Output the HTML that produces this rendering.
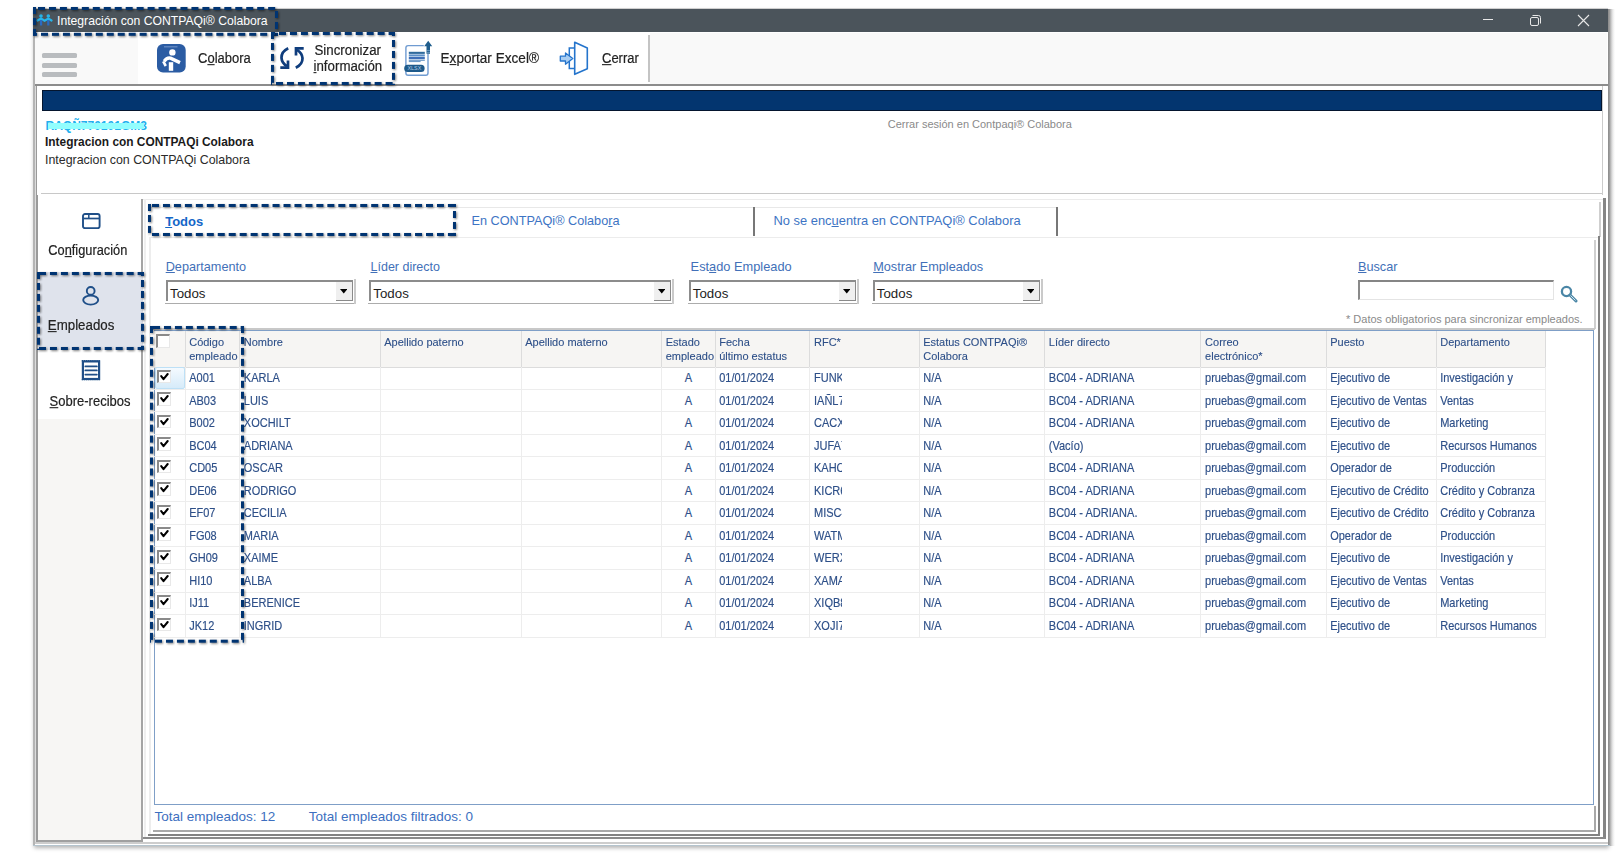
<!DOCTYPE html><html><head><meta charset="utf-8"><style>
html,body{margin:0;padding:0;}
body{width:1617px;height:855px;position:relative;overflow:hidden;background:#fff;font-family:"Liberation Sans", sans-serif;}
.t{position:absolute;white-space:nowrap;font-family:"Liberation Sans", sans-serif;}
.r{position:absolute;}
.dash{filter:drop-shadow(1px 1.5px 1.1px rgba(0,0,0,0.5));overflow:visible;}
u{text-decoration:underline;text-underline-offset:1px;}
</style></head><body>
<div class="r" style="left:33px;top:9px;width:1575px;height:837px;background:#f0f0f0;box-shadow:1px 2px 4px rgba(0,0,0,0.3);"></div>
<div class="r" style="left:33px;top:7.8px;width:1575px;height:1.2000000000000002px;background:#cfcfcf;"></div>
<div class="r" style="left:33px;top:9px;width:1575px;height:23px;background:#4b545b;"></div>
<svg class="r" style="left:36px;top:13px" width="18" height="14" viewBox="0 0 18 14">
<circle cx="5" cy="3" r="1.8" fill="#26b4ea"/><circle cx="12.3" cy="3" r="1.8" fill="#26b4ea"/>
<path d="M1.5 7.5 L5 5.5 L8.6 7.8 L12.3 5.5 L15.5 7.5" stroke="#26b4ea" stroke-width="2.2" fill="none" stroke-linecap="round"/>
<rect x="4" y="7" width="2.2" height="5.5" fill="#2a6bc2"/><rect x="11.2" y="7" width="2.2" height="5.5" fill="#2a6bc2"/>
</svg>
<div class="t" style="left:57px;top:14.67px;font-size:12.2px;line-height:12.2px;color:#ffffff;font-weight:normal;">Integración con CONTPAQi® Colabora</div>
<div class="r" style="left:1483px;top:19px;width:10px;height:1px;background:#e8e8e8;"></div>
<svg class="r" style="left:1529px;top:14px" width="13" height="13" viewBox="0 0 13 13">
<rect x="1.5" y="3.5" width="8" height="8" rx="1.5" fill="none" stroke="#e8e8e8" stroke-width="1"/>
<path d="M3.5 1.5 H9.5 Q11.5 1.5 11.5 3.5 V9.5" fill="none" stroke="#e8e8e8" stroke-width="1"/></svg>
<svg class="r" style="left:1577px;top:14px" width="13" height="13" viewBox="0 0 13 13">
<path d="M1 1 L12 12 M12 1 L1 12" stroke="#e8e8e8" stroke-width="1.1"/></svg>
<div class="r" style="left:35px;top:32px;width:1573px;height:52px;background:#f9f9f9;"></div>
<div class="r" style="left:35px;top:32px;width:1573px;height:1px;background:#ffffff;"></div>
<div class="r" style="left:1606.8px;top:33px;width:1.2000000000000455px;height:51px;background:#ffffff;"></div>
<div class="r" style="left:138px;top:32px;width:512px;height:52px;background:#ffffff;"></div>
<div class="r" style="left:648.2px;top:35px;width:1.599999999999909px;height:47px;background:#c4c4c4;"></div>
<div class="r" style="left:42px;top:53px;width:35px;height:5px;background:#b9bcbf;border-radius:1.6px;"></div>
<div class="r" style="left:42px;top:63px;width:35px;height:5px;background:#b9bcbf;border-radius:1.6px;"></div>
<div class="r" style="left:42px;top:72px;width:35px;height:5px;background:#b9bcbf;border-radius:1.6px;"></div>
<div class="r" style="left:35px;top:84px;width:1573px;height:2px;background:#8c8c8c;"></div>
<div class="r" style="left:33px;top:32px;width:2px;height:814px;background:#b4b4b4;"></div>
<div class="r" style="left:1608px;top:9px;width:7px;height:837.2px;background:linear-gradient(to right,#8a8a8a 0%,#9a9a9a 20%,#c8c8c8 45%,#ececec 70%,#ffffff 100%);"></div>
<svg class="r" style="left:156.7px;top:43.6px" width="29" height="29" viewBox="0 0 29 29">
<rect x="0" y="0" width="28.7" height="28.6" rx="6" fill="#2b5ca3"/>
<rect x="7" y="2.4" width="13.5" height="0.9" fill="#7f9fd2"/>
<circle cx="15.4" cy="8.4" r="3.2" fill="#fff"/>
<path d="M7.2 17.2 Q10 13.4 13.5 14.2 L23 18.6" stroke="#fff" stroke-width="3.4" fill="none"/>
<path d="M6.2 17.4 L8.8 22" stroke="#fff" stroke-width="2.6" fill="none"/>
<rect x="11.8" y="18.2" width="4.4" height="8.6" fill="#fff"/>
</svg>
<div class="t" style="left:198px;top:52.00px;font-size:13px;line-height:13px;color:#222;font-weight:normal;transform:scaleY(1.1);transform-origin:0 11.00px;-webkit-text-stroke:0.18px #222;">C<u>o</u>labora</div>
<svg class="r" style="left:276px;top:42px" width="32" height="32" viewBox="0 0 32 32">
<g stroke="#0f3d7d" stroke-width="2.7" fill="none">
<path d="M12.2 6.3 Q5.3 9.8 5.5 15.8 Q5.8 21 11 24.2"/>
<path d="M4.3 25.6 H12 V18.6" stroke-linejoin="miter"/>
<path d="M19.8 25.7 Q26.7 22.2 26.5 16.2 Q26.2 11 21 7.8"/>
<path d="M27.7 6.4 H20 V13.4" stroke-linejoin="miter"/>
</g></svg>
<div class="t" style="left:314.5px;top:43.54px;font-size:13.3px;line-height:13.3px;color:#222;font-weight:normal;transform:scaleY(1.1);transform-origin:0 11.26px;-webkit-text-stroke:0.18px #222;">Sincronizar</div>
<div class="t" style="left:313.5px;top:59.94px;font-size:13.3px;line-height:13.3px;color:#222;font-weight:normal;transform:scaleY(1.1);transform-origin:0 11.26px;-webkit-text-stroke:0.18px #222;"><u>i</u>nformación</div>
<svg class="r" style="left:400px;top:38px" width="36" height="42" viewBox="0 0 36 42">
<rect x="5.9" y="7.6" width="22.1" height="29.7" rx="2.2" fill="#fff" stroke="#6f9bd1" stroke-width="1.4"/>
<rect x="23.8" y="4" width="9" height="12" fill="#fff"/>
<path d="M28.2 2.7 L24.2 8.2 H26.5 V15.8 H30 V8.2 H32.2 Z" fill="#1f5d8c"/>
<path d="M26.5 12.6 H30 M26.5 14.4 H30" stroke="#9cc0e0" stroke-width="0.6"/>
<rect x="8.8" y="13.8" width="16" height="2.1" fill="#2f6a9c"/>
<rect x="8.8" y="16.4" width="16" height="2.1" fill="#5d90c8"/>
<rect x="8.8" y="19" width="16" height="2.1" fill="#3f6fb8"/>
<rect x="8.8" y="21.6" width="16" height="1.3" fill="#6f9bc8"/>
<rect x="8.8" y="22.9" width="11.8" height="1.2" fill="#6f9bc8"/>
<rect x="4.2" y="26.8" width="20.4" height="7.1" rx="3.5" fill="#1e5a8a"/>
<text x="14.4" y="32.3" font-size="5.4" fill="#b4cce4" text-anchor="middle" font-family="Liberation Sans">XLSX</text>
</svg>
<div class="t" style="left:440.5px;top:51.79px;font-size:13.6px;line-height:13.6px;color:#222;font-weight:normal;transform:scaleY(1.07);transform-origin:0 11.51px;-webkit-text-stroke:0.18px #222;">E<u>x</u>portar Excel®</div>
<svg class="r" style="left:559px;top:41px" width="32" height="35" viewBox="0 0 32 35">
<path d="M15.7 1.3 L28.3 7 V27.8 L15.7 33.3 Z" fill="#fff" stroke="#2474cc" stroke-width="1.6" stroke-linejoin="round"/>
<path d="M15.5 6.9 H10.3 V27.6 H15.5" fill="none" stroke="#2474cc" stroke-width="1.5"/>
<path d="M1.3 15.2 H6.5 V12 L13.8 17.6 L6.5 23.2 V20 H1.3 Z" fill="#a8cdf2" stroke="#2474cc" stroke-width="1.3" stroke-linejoin="round"/>
</svg>
<div class="t" style="left:602px;top:52.00px;font-size:13px;line-height:13px;color:#222;font-weight:normal;transform:scaleY(1.1);transform-origin:0 11.00px;-webkit-text-stroke:0.18px #222;"><u>C</u>errar</div>
<div class="r" style="left:35px;top:86px;width:1573px;height:760px;background:#ffffff;"></div>
<div class="r" style="left:36px;top:86px;width:1567px;height:109px;background:#ffffff;border-left:1.5px solid #999;border-right:1px solid #ccc;box-sizing:border-box;"></div>
<div class="r" style="left:41px;top:193.3px;width:1561px;height:1.1999999999999886px;background:#c8c8c8;"></div>
<div class="r" style="left:42px;top:90px;width:1560px;height:21px;background:#03356f;border:1px solid #04152e;box-sizing:border-box;"></div>
<div class="t" style="left:45.5px;top:119.64px;font-size:12px;line-height:12px;color:#22b0ee;font-weight:bold;">RAQÑ770101GM3</div>
<div class="r" style="left:48px;top:123px;width:96px;height:5.5px;background:#92fefe;"></div>
<div class="t" style="left:45px;top:136.53px;font-size:11.9px;line-height:11.9px;color:#1a1a1a;font-weight:bold;">Integracion con CONTPAQi Colabora</div>
<div class="t" style="left:45px;top:153.50px;font-size:12.4px;line-height:12.4px;color:#2a2a2a;font-weight:normal;">Integracion con CONTPAQi Colabora</div>
<div class="t" style="left:887.7px;top:119.29px;font-size:11px;line-height:11px;color:#8a8a8a;font-weight:normal;">Cerrar sesión en Contpaqi® Colabora</div>
<div class="r" style="left:35px;top:86px;width:1px;height:756px;background:#dcdcdc;"></div>
<div class="r" style="left:36px;top:195px;width:2px;height:647px;background:#9a9a9a;"></div>
<div class="r" style="left:38px;top:199px;width:104px;height:642px;background:#f7f6f4;"></div>
<div class="r" style="left:38px;top:199px;width:104px;height:220px;background:#ffffff;"></div>
<div class="r" style="left:141.3px;top:199px;width:1.6999999999999886px;height:642.6px;background:#a4a4a4;"></div>
<div class="r" style="left:38px;top:840px;width:105px;height:1.6000000000000227px;background:#a0a0a0;"></div>
<div class="r" style="left:38px;top:272px;width:106px;height:78px;background:#dfe3ec;"></div>
<svg class="r" style="left:82px;top:213px" width="19" height="16" viewBox="0 0 19 16">
<rect x="1" y="1" width="16.6" height="14.2" rx="2" fill="none" stroke="#1f4f88" stroke-width="1.9"/>
<path d="M1.5 5.5 H17.5" stroke="#1f4f88" stroke-width="1.7"/>
<path d="M6.8 1.5 V5" stroke="#1f4f88" stroke-width="1.5"/>
</svg>
<div class="t" style="left:48.3px;top:244.66px;font-size:12.8px;line-height:12.8px;color:#222;font-weight:normal;transform:scaleY(1.14);transform-origin:0 10.84px;-webkit-text-stroke:0.18px #222;">Co<u>n</u>figuración</div>
<svg class="r" style="left:82px;top:285px" width="18" height="21" viewBox="0 0 18 21">
<ellipse cx="8.7" cy="15.1" rx="7.5" ry="4.5" fill="none" stroke="#1f4f88" stroke-width="1.9"/>
<circle cx="8.7" cy="5.9" r="3.9" fill="#dfe3ec" stroke="#1f4f88" stroke-width="1.9"/>
</svg>
<div class="t" style="left:47.8px;top:318.54px;font-size:13.3px;line-height:13.3px;color:#222;font-weight:normal;transform:scaleY(1.1);transform-origin:0 11.26px;-webkit-text-stroke:0.18px #222;"><u>E</u>mpleados</div>
<svg class="r" style="left:81px;top:359px" width="20" height="22" viewBox="0 0 20 22">
<rect x="1.9" y="2.4" width="16.2" height="17.6" fill="none" stroke="#1f4f88" stroke-width="2.2"/>
<path d="M0.8 1.8 H19.2 M0.8 20.6 H19.2" stroke="#1f4f88" stroke-width="1.4" stroke-dasharray="1.2 0.9"/>
<path d="M4.3 7.4 H15.9 M4.3 11.4 H15.9 M4.3 15.6 H15.9" stroke="#1f4f88" stroke-width="1.7" stroke-linecap="round"/>
</svg>
<div class="t" style="left:49.6px;top:395.40px;font-size:13px;line-height:13px;color:#222;font-weight:normal;transform:scaleY(1.12);transform-origin:0 11.00px;-webkit-text-stroke:0.18px #222;"><u>S</u>obre-recibos</div>
<div class="r" style="left:143px;top:198px;width:1463px;height:641px;background:#ffffff;"></div>
<div class="r" style="left:143px;top:199.2px;width:1460px;height:1.200000000000017px;background:#ececec;"></div>
<div class="r" style="left:144.2px;top:199.2px;width:1.4000000000000057px;height:637.8px;background:#efefef;"></div>
<div class="r" style="left:1603px;top:197.8px;width:2.7999999999999545px;height:641.2px;background:#858585;"></div>
<div class="r" style="left:143px;top:836.7px;width:1462.8px;height:2.099999999999909px;background:#8a8a8a;"></div>
<div class="r" style="left:151px;top:206.5px;width:905px;height:1.0px;background:#e8e8e8;"></div>
<div class="r" style="left:150px;top:237px;width:1450px;height:1.3000000000000114px;background:#ececec;"></div>
<div class="r" style="left:1599.3px;top:202.3px;width:1.7000000000000455px;height:34.69999999999999px;background:#cfcfcf;"></div>
<div class="r" style="left:753px;top:207px;width:2px;height:29px;background:#777;"></div>
<div class="r" style="left:1055.5px;top:207px;width:2.2000000000000455px;height:29px;background:#777;"></div>
<div class="t" style="left:165.2px;top:214.60px;font-size:13px;line-height:13px;color:#1466c8;font-weight:bold;"><u>T</u>odos</div>
<div class="t" style="left:471.5px;top:214.75px;font-size:12.7px;line-height:12.7px;color:#3d74c4;font-weight:normal;">En CONTPAQi® Colabo<u>r</u>a</div>
<div class="t" style="left:773.5px;top:214.58px;font-size:12.9px;line-height:12.9px;color:#3d74c4;font-weight:normal;">No se enc<u>u</u>entra en CONTPAQi® Colabora</div>
<div class="r" style="left:148.9px;top:237.3px;width:1.799999999999983px;height:596.7px;background:#ededed;"></div>
<div class="r" style="left:1594.3px;top:240.4px;width:1.2999999999999545px;height:88.6px;background:#cfcfcf;"></div>
<div class="t" style="left:165.7px;top:260.55px;font-size:12.7px;line-height:12.7px;color:#4270b8;font-weight:normal;"><u>D</u>epartamento</div>
<div class="t" style="left:370.5px;top:260.72px;font-size:12.5px;line-height:12.5px;color:#4270b8;font-weight:normal;"><u>L</u>íder directo</div>
<div class="t" style="left:690.6px;top:260.76px;font-size:12.8px;line-height:12.8px;color:#4270b8;font-weight:normal;">Est<u>a</u>do Empleado</div>
<div class="t" style="left:873.2px;top:260.85px;font-size:12.7px;line-height:12.7px;color:#4270b8;font-weight:normal;"><u>M</u>ostrar Empleados</div>
<div class="t" style="left:1358px;top:260.55px;font-size:12.7px;line-height:12.7px;color:#4270b8;font-weight:normal;"><u>B</u>uscar</div>
<div class="r" style="left:165.8px;top:280.3px;width:187.2px;height:2.1999999999999886px;background:#8c8c8c;"></div>
<div class="r" style="left:165.8px;top:280.3px;width:2.1999999999999886px;height:21.19999999999999px;background:#8c8c8c;"></div>
<div class="r" style="left:165px;top:303px;width:191px;height:1px;background:#acacac;"></div>
<div class="r" style="left:354.3px;top:279px;width:1.6999999999999886px;height:25px;background:#cacaca;"></div>
<div class="r" style="left:336px;top:282px;width:17px;height:19px;background:#efefef;border-right:1.7px solid #8a8a8a;border-bottom:1.5px solid #8a8a8a;box-sizing:border-box;"></div>
<svg class="r" style="left:339.8px;top:289.3px" width="7.5" height="4.6" viewBox="0 0 7.5 4.6"><path d="M0 0 H7.5 L3.75 4.6 Z" fill="#000"/></svg>
<div class="r" style="left:368.8px;top:280.3px;width:302.2px;height:2.1999999999999886px;background:#8c8c8c;"></div>
<div class="r" style="left:368.8px;top:280.3px;width:2.1999999999999886px;height:21.19999999999999px;background:#8c8c8c;"></div>
<div class="r" style="left:368px;top:303px;width:306px;height:1px;background:#acacac;"></div>
<div class="r" style="left:672.3px;top:279px;width:1.7000000000000455px;height:25px;background:#cacaca;"></div>
<div class="r" style="left:654px;top:282px;width:17px;height:19px;background:#efefef;border-right:1.7px solid #8a8a8a;border-bottom:1.5px solid #8a8a8a;box-sizing:border-box;"></div>
<svg class="r" style="left:657.8px;top:289.3px" width="7.5" height="4.6" viewBox="0 0 7.5 4.6"><path d="M0 0 H7.5 L3.75 4.6 Z" fill="#000"/></svg>
<div class="r" style="left:688.8px;top:280.3px;width:167.20000000000005px;height:2.1999999999999886px;background:#8c8c8c;"></div>
<div class="r" style="left:688.8px;top:280.3px;width:2.2000000000000455px;height:21.19999999999999px;background:#8c8c8c;"></div>
<div class="r" style="left:688px;top:303px;width:171px;height:1px;background:#acacac;"></div>
<div class="r" style="left:857.3px;top:279px;width:1.7000000000000455px;height:25px;background:#cacaca;"></div>
<div class="r" style="left:839px;top:282px;width:17px;height:19px;background:#efefef;border-right:1.7px solid #8a8a8a;border-bottom:1.5px solid #8a8a8a;box-sizing:border-box;"></div>
<svg class="r" style="left:842.8px;top:289.3px" width="7.5" height="4.6" viewBox="0 0 7.5 4.6"><path d="M0 0 H7.5 L3.75 4.6 Z" fill="#000"/></svg>
<div class="r" style="left:872.8px;top:280.3px;width:167.20000000000005px;height:2.1999999999999886px;background:#8c8c8c;"></div>
<div class="r" style="left:872.8px;top:280.3px;width:2.2000000000000455px;height:21.19999999999999px;background:#8c8c8c;"></div>
<div class="r" style="left:872px;top:303px;width:171px;height:1px;background:#acacac;"></div>
<div class="r" style="left:1041.3px;top:279px;width:1.7000000000000455px;height:25px;background:#cacaca;"></div>
<div class="r" style="left:1023px;top:282px;width:17px;height:19px;background:#efefef;border-right:1.7px solid #8a8a8a;border-bottom:1.5px solid #8a8a8a;box-sizing:border-box;"></div>
<svg class="r" style="left:1026.8px;top:289.3px" width="7.5" height="4.6" viewBox="0 0 7.5 4.6"><path d="M0 0 H7.5 L3.75 4.6 Z" fill="#000"/></svg>
<div class="t" style="left:170px;top:286.54px;font-size:13.3px;line-height:13.3px;color:#1e1e1e;font-weight:normal;">Todos</div>
<div class="t" style="left:373.3px;top:286.54px;font-size:13.3px;line-height:13.3px;color:#1e1e1e;font-weight:normal;">Todos</div>
<div class="t" style="left:692.8px;top:286.54px;font-size:13.3px;line-height:13.3px;color:#1e1e1e;font-weight:normal;">Todos</div>
<div class="t" style="left:876.8px;top:286.54px;font-size:13.3px;line-height:13.3px;color:#1e1e1e;font-weight:normal;">Todos</div>
<div class="r" style="left:1358px;top:279.8px;width:195.5px;height:20.69999999999999px;background:#fff;border-top:2px solid #858585;border-left:2px solid #8a8a8a;border-right:1px solid #e4e4e4;border-bottom:1px solid #e4e4e4;box-sizing:border-box;"></div>
<svg class="r" style="left:1560px;top:285px" width="18" height="18" viewBox="0 0 18 18">
<circle cx="6.5" cy="6.5" r="4.6" fill="none" stroke="#4a86a6" stroke-width="2.3"/>
<path d="M10 10 L16 16" stroke="#4a86a6" stroke-width="3" stroke-linecap="round"/>
<path d="M10.5 10.5 L15.5 15.5" stroke="#cfe3ec" stroke-width="1"/>
</svg>
<div class="t" style="left:1346px;top:313.69px;font-size:11px;line-height:11px;color:#8a8a8a;font-weight:normal;">* Datos obligatorios para sincronizar empleados.</div>
<div class="r" style="left:152px;top:328px;width:1443px;height:2px;background:#c8c8c8;"></div>
<div class="r" style="left:154px;top:330px;width:1440px;height:475px;background:#ffffff;border:1px solid #7f9fc7;box-sizing:border-box;"></div>
<div class="r" style="left:154px;top:331px;width:1391px;height:36px;background:#f6f5f3;"></div>
<div class="r" style="left:154px;top:366.5px;width:1392px;height:1.1999999999999886px;background:#dcdcdc;"></div>
<div class="r" style="left:184.5px;top:331px;width:1.0px;height:36px;background:#dcdcdc;"></div>
<div class="r" style="left:239.1px;top:331px;width:1.0px;height:36px;background:#dcdcdc;"></div>
<div class="r" style="left:379.5px;top:331px;width:1.0px;height:36px;background:#dcdcdc;"></div>
<div class="r" style="left:520.5px;top:331px;width:1.0px;height:36px;background:#dcdcdc;"></div>
<div class="r" style="left:661.0px;top:331px;width:1.0px;height:36px;background:#dcdcdc;"></div>
<div class="r" style="left:714.5px;top:331px;width:1.0px;height:36px;background:#dcdcdc;"></div>
<div class="r" style="left:809.3px;top:331px;width:1.0px;height:36px;background:#dcdcdc;"></div>
<div class="r" style="left:918.5px;top:331px;width:1.0px;height:36px;background:#dcdcdc;"></div>
<div class="r" style="left:1044.1px;top:331px;width:1.0px;height:36px;background:#dcdcdc;"></div>
<div class="r" style="left:1200.4px;top:331px;width:1.0px;height:36px;background:#dcdcdc;"></div>
<div class="r" style="left:1325.5px;top:331px;width:1.0px;height:36px;background:#dcdcdc;"></div>
<div class="r" style="left:1435.5px;top:331px;width:1.0px;height:36px;background:#dcdcdc;"></div>
<div class="r" style="left:1544.5px;top:331px;width:1.0px;height:36px;background:#dcdcdc;"></div>
<div class="t" style="left:189.2px;top:337.09px;font-size:11px;line-height:11px;color:#2d4f88;font-weight:normal;transform:scaleY(1.07);transform-origin:0 9.31px;-webkit-text-stroke:0.1px #2d4f88;">Código</div>
<div class="t" style="left:189.2px;top:350.99px;font-size:11px;line-height:11px;color:#2d4f88;font-weight:normal;transform:scaleY(1.07);transform-origin:0 9.31px;-webkit-text-stroke:0.1px #2d4f88;">empleado</div>
<div class="t" style="left:243.79999999999998px;top:337.09px;font-size:11px;line-height:11px;color:#2d4f88;font-weight:normal;transform:scaleY(1.07);transform-origin:0 9.31px;-webkit-text-stroke:0.1px #2d4f88;">Nombre</div>
<div class="t" style="left:384.2px;top:337.09px;font-size:11px;line-height:11px;color:#2d4f88;font-weight:normal;transform:scaleY(1.07);transform-origin:0 9.31px;-webkit-text-stroke:0.1px #2d4f88;">Apellido paterno</div>
<div class="t" style="left:525.2px;top:337.09px;font-size:11px;line-height:11px;color:#2d4f88;font-weight:normal;transform:scaleY(1.07);transform-origin:0 9.31px;-webkit-text-stroke:0.1px #2d4f88;">Apellido materno</div>
<div class="t" style="left:665.7px;top:337.09px;font-size:11px;line-height:11px;color:#2d4f88;font-weight:normal;transform:scaleY(1.07);transform-origin:0 9.31px;-webkit-text-stroke:0.1px #2d4f88;">Estado</div>
<div class="t" style="left:665.7px;top:350.99px;font-size:11px;line-height:11px;color:#2d4f88;font-weight:normal;transform:scaleY(1.07);transform-origin:0 9.31px;-webkit-text-stroke:0.1px #2d4f88;">empleado</div>
<div class="t" style="left:719.2px;top:337.09px;font-size:11px;line-height:11px;color:#2d4f88;font-weight:normal;transform:scaleY(1.07);transform-origin:0 9.31px;-webkit-text-stroke:0.1px #2d4f88;">Fecha</div>
<div class="t" style="left:719.2px;top:350.99px;font-size:11px;line-height:11px;color:#2d4f88;font-weight:normal;transform:scaleY(1.07);transform-origin:0 9.31px;-webkit-text-stroke:0.1px #2d4f88;">último estatus</div>
<div class="t" style="left:814.0px;top:337.09px;font-size:11px;line-height:11px;color:#2d4f88;font-weight:normal;transform:scaleY(1.07);transform-origin:0 9.31px;-webkit-text-stroke:0.1px #2d4f88;">RFC*</div>
<div class="t" style="left:923.2px;top:337.09px;font-size:11px;line-height:11px;color:#2d4f88;font-weight:normal;transform:scaleY(1.07);transform-origin:0 9.31px;-webkit-text-stroke:0.1px #2d4f88;">Estatus CONTPAQi®</div>
<div class="t" style="left:923.2px;top:350.99px;font-size:11px;line-height:11px;color:#2d4f88;font-weight:normal;transform:scaleY(1.07);transform-origin:0 9.31px;-webkit-text-stroke:0.1px #2d4f88;">Colabora</div>
<div class="t" style="left:1048.8px;top:337.09px;font-size:11px;line-height:11px;color:#2d4f88;font-weight:normal;transform:scaleY(1.07);transform-origin:0 9.31px;-webkit-text-stroke:0.1px #2d4f88;">Líder directo</div>
<div class="t" style="left:1205.1000000000001px;top:337.09px;font-size:11px;line-height:11px;color:#2d4f88;font-weight:normal;transform:scaleY(1.07);transform-origin:0 9.31px;-webkit-text-stroke:0.1px #2d4f88;">Correo</div>
<div class="t" style="left:1205.1000000000001px;top:350.99px;font-size:11px;line-height:11px;color:#2d4f88;font-weight:normal;transform:scaleY(1.07);transform-origin:0 9.31px;-webkit-text-stroke:0.1px #2d4f88;">electrónico*</div>
<div class="t" style="left:1330.2px;top:337.09px;font-size:11px;line-height:11px;color:#2d4f88;font-weight:normal;transform:scaleY(1.07);transform-origin:0 9.31px;-webkit-text-stroke:0.1px #2d4f88;">Puesto</div>
<div class="t" style="left:1440.2px;top:337.09px;font-size:11px;line-height:11px;color:#2d4f88;font-weight:normal;transform:scaleY(1.07);transform-origin:0 9.31px;-webkit-text-stroke:0.1px #2d4f88;">Departamento</div>
<div class="r" style="left:154px;top:388.55px;width:1392px;height:1px;background:#ededed"></div>
<div class="r" style="left:155.2px;top:367.4px;width:30px;height:21.4px;background:linear-gradient(#f4faff,#d6ebf9);border:1.3px solid #bde0f6;border-radius:2px;box-sizing:border-box"></div>
<div class="r" style="left:156.8px;top:369.50px;width:14px;height:13.8px;box-sizing:border-box;border-top:2px solid #8a8a8a;border-left:2px solid #8a8a8a;border-right:1px solid #e8e8e8;border-bottom:1px solid #e8e8e8;background:#fff"></div>
<svg class="r" style="left:156.8px;top:369.50px" width="14" height="14" viewBox="0 0 14 14"><path d="M4.2 6.1 L6.5 9.1 L10.7 4" fill="none" stroke="#000" stroke-width="2.05" stroke-linejoin="round" stroke-linecap="round"/></svg>
<div class="t" style="left:189.2px;top:373.19px;font-size:11px;line-height:11px;color:#2d4f88;font-weight:normal;transform:scaleY(1.09);transform-origin:0 9.31px;-webkit-text-stroke:0.15px #2d4f88;">A001</div>
<div class="t" style="left:243.79999999999998px;top:373.19px;font-size:11px;line-height:11px;color:#2d4f88;font-weight:normal;transform:scaleY(1.09);transform-origin:0 9.31px;-webkit-text-stroke:0.15px #2d4f88;">KARLA</div>
<div class="t" style="left:688.5px;top:373.19px;font-size:11px;line-height:11px;color:#2d4f88;font-weight:normal;transform:translateX(-50%) scaleY(1.09);transform-origin:0 9.31px;-webkit-text-stroke:0.15px #2d4f88;">A</div>
<div class="t" style="left:719.2px;top:373.19px;font-size:11px;line-height:11px;color:#2d4f88;font-weight:normal;transform:scaleY(1.09);transform-origin:0 9.31px;-webkit-text-stroke:0.15px #2d4f88;">01/01/2024</div>
<div class="t" style="left:814.0px;top:373.19px;font-size:11px;line-height:11px;color:#2d4f88;font-weight:normal;width:28px;overflow:hidden;padding-top:5px;margin-top:-5px;padding-bottom:3px;transform:scaleY(1.09);transform-origin:0 14.31px;-webkit-text-stroke:0.15px #2d4f88;">FUNK9</div>
<div class="t" style="left:923.2px;top:373.19px;font-size:11px;line-height:11px;color:#2d4f88;font-weight:normal;transform:scaleY(1.09);transform-origin:0 9.31px;-webkit-text-stroke:0.15px #2d4f88;">N/A</div>
<div class="t" style="left:1048.8px;top:373.19px;font-size:11px;line-height:11px;color:#2d4f88;font-weight:normal;transform:scaleY(1.09);transform-origin:0 9.31px;-webkit-text-stroke:0.15px #2d4f88;">BC04 - ADRIANA</div>
<div class="t" style="left:1205.1000000000001px;top:373.19px;font-size:11px;line-height:11px;color:#2d4f88;font-weight:normal;transform:scaleY(1.09);transform-origin:0 9.31px;-webkit-text-stroke:0.15px #2d4f88;">pruebas@gmail.com</div>
<div class="t" style="left:1330.2px;top:373.19px;font-size:11px;line-height:11px;color:#2d4f88;font-weight:normal;transform:scaleY(1.09);transform-origin:0 9.31px;-webkit-text-stroke:0.15px #2d4f88;">Ejecutivo de</div>
<div class="t" style="left:1440.2px;top:373.19px;font-size:11px;line-height:11px;color:#2d4f88;font-weight:normal;transform:scaleY(1.09);transform-origin:0 9.31px;-webkit-text-stroke:0.15px #2d4f88;">Investigación y</div>
<div class="r" style="left:154px;top:411.10px;width:1392px;height:1px;background:#ededed"></div>
<div class="r" style="left:156.8px;top:392.05px;width:14px;height:13.8px;box-sizing:border-box;border-top:2px solid #8a8a8a;border-left:2px solid #8a8a8a;border-right:1px solid #e8e8e8;border-bottom:1px solid #e8e8e8;background:#fff"></div>
<svg class="r" style="left:156.8px;top:392.05px" width="14" height="14" viewBox="0 0 14 14"><path d="M4.2 6.1 L6.5 9.1 L10.7 4" fill="none" stroke="#000" stroke-width="2.05" stroke-linejoin="round" stroke-linecap="round"/></svg>
<div class="t" style="left:189.2px;top:395.71px;font-size:11px;line-height:11px;color:#2d4f88;font-weight:normal;transform:scaleY(1.09);transform-origin:0 9.31px;-webkit-text-stroke:0.15px #2d4f88;">AB03</div>
<div class="t" style="left:243.79999999999998px;top:395.71px;font-size:11px;line-height:11px;color:#2d4f88;font-weight:normal;transform:scaleY(1.09);transform-origin:0 9.31px;-webkit-text-stroke:0.15px #2d4f88;">LUIS</div>
<div class="t" style="left:688.5px;top:395.71px;font-size:11px;line-height:11px;color:#2d4f88;font-weight:normal;transform:translateX(-50%) scaleY(1.09);transform-origin:0 9.31px;-webkit-text-stroke:0.15px #2d4f88;">A</div>
<div class="t" style="left:719.2px;top:395.71px;font-size:11px;line-height:11px;color:#2d4f88;font-weight:normal;transform:scaleY(1.09);transform-origin:0 9.31px;-webkit-text-stroke:0.15px #2d4f88;">01/01/2024</div>
<div class="t" style="left:814.0px;top:395.71px;font-size:11px;line-height:11px;color:#2d4f88;font-weight:normal;width:28px;overflow:hidden;padding-top:5px;margin-top:-5px;padding-bottom:3px;transform:scaleY(1.09);transform-origin:0 14.31px;-webkit-text-stroke:0.15px #2d4f88;">IAÑL7</div>
<div class="t" style="left:923.2px;top:395.71px;font-size:11px;line-height:11px;color:#2d4f88;font-weight:normal;transform:scaleY(1.09);transform-origin:0 9.31px;-webkit-text-stroke:0.15px #2d4f88;">N/A</div>
<div class="t" style="left:1048.8px;top:395.71px;font-size:11px;line-height:11px;color:#2d4f88;font-weight:normal;transform:scaleY(1.09);transform-origin:0 9.31px;-webkit-text-stroke:0.15px #2d4f88;">BC04 - ADRIANA</div>
<div class="t" style="left:1205.1000000000001px;top:395.71px;font-size:11px;line-height:11px;color:#2d4f88;font-weight:normal;transform:scaleY(1.09);transform-origin:0 9.31px;-webkit-text-stroke:0.15px #2d4f88;">pruebas@gmail.com</div>
<div class="t" style="left:1330.2px;top:395.71px;font-size:11px;line-height:11px;color:#2d4f88;font-weight:normal;transform:scaleY(1.09);transform-origin:0 9.31px;-webkit-text-stroke:0.15px #2d4f88;">Ejecutivo de Ventas</div>
<div class="t" style="left:1440.2px;top:395.71px;font-size:11px;line-height:11px;color:#2d4f88;font-weight:normal;transform:scaleY(1.09);transform-origin:0 9.31px;-webkit-text-stroke:0.15px #2d4f88;">Ventas</div>
<div class="r" style="left:154px;top:433.65px;width:1392px;height:1px;background:#ededed"></div>
<div class="r" style="left:156.8px;top:414.60px;width:14px;height:13.8px;box-sizing:border-box;border-top:2px solid #8a8a8a;border-left:2px solid #8a8a8a;border-right:1px solid #e8e8e8;border-bottom:1px solid #e8e8e8;background:#fff"></div>
<svg class="r" style="left:156.8px;top:414.60px" width="14" height="14" viewBox="0 0 14 14"><path d="M4.2 6.1 L6.5 9.1 L10.7 4" fill="none" stroke="#000" stroke-width="2.05" stroke-linejoin="round" stroke-linecap="round"/></svg>
<div class="t" style="left:189.2px;top:418.23px;font-size:11px;line-height:11px;color:#2d4f88;font-weight:normal;transform:scaleY(1.09);transform-origin:0 9.31px;-webkit-text-stroke:0.15px #2d4f88;">B002</div>
<div class="t" style="left:243.79999999999998px;top:418.23px;font-size:11px;line-height:11px;color:#2d4f88;font-weight:normal;transform:scaleY(1.09);transform-origin:0 9.31px;-webkit-text-stroke:0.15px #2d4f88;">XOCHILT</div>
<div class="t" style="left:688.5px;top:418.23px;font-size:11px;line-height:11px;color:#2d4f88;font-weight:normal;transform:translateX(-50%) scaleY(1.09);transform-origin:0 9.31px;-webkit-text-stroke:0.15px #2d4f88;">A</div>
<div class="t" style="left:719.2px;top:418.23px;font-size:11px;line-height:11px;color:#2d4f88;font-weight:normal;transform:scaleY(1.09);transform-origin:0 9.31px;-webkit-text-stroke:0.15px #2d4f88;">01/01/2024</div>
<div class="t" style="left:814.0px;top:418.23px;font-size:11px;line-height:11px;color:#2d4f88;font-weight:normal;width:28px;overflow:hidden;padding-top:5px;margin-top:-5px;padding-bottom:3px;transform:scaleY(1.09);transform-origin:0 14.31px;-webkit-text-stroke:0.15px #2d4f88;">CACX</div>
<div class="t" style="left:923.2px;top:418.23px;font-size:11px;line-height:11px;color:#2d4f88;font-weight:normal;transform:scaleY(1.09);transform-origin:0 9.31px;-webkit-text-stroke:0.15px #2d4f88;">N/A</div>
<div class="t" style="left:1048.8px;top:418.23px;font-size:11px;line-height:11px;color:#2d4f88;font-weight:normal;transform:scaleY(1.09);transform-origin:0 9.31px;-webkit-text-stroke:0.15px #2d4f88;">BC04 - ADRIANA</div>
<div class="t" style="left:1205.1000000000001px;top:418.23px;font-size:11px;line-height:11px;color:#2d4f88;font-weight:normal;transform:scaleY(1.09);transform-origin:0 9.31px;-webkit-text-stroke:0.15px #2d4f88;">pruebas@gmail.com</div>
<div class="t" style="left:1330.2px;top:418.23px;font-size:11px;line-height:11px;color:#2d4f88;font-weight:normal;transform:scaleY(1.09);transform-origin:0 9.31px;-webkit-text-stroke:0.15px #2d4f88;">Ejecutivo de</div>
<div class="t" style="left:1440.2px;top:418.23px;font-size:11px;line-height:11px;color:#2d4f88;font-weight:normal;transform:scaleY(1.09);transform-origin:0 9.31px;-webkit-text-stroke:0.15px #2d4f88;">Marketing</div>
<div class="r" style="left:154px;top:456.20px;width:1392px;height:1px;background:#ededed"></div>
<div class="r" style="left:156.8px;top:437.15px;width:14px;height:13.8px;box-sizing:border-box;border-top:2px solid #8a8a8a;border-left:2px solid #8a8a8a;border-right:1px solid #e8e8e8;border-bottom:1px solid #e8e8e8;background:#fff"></div>
<svg class="r" style="left:156.8px;top:437.15px" width="14" height="14" viewBox="0 0 14 14"><path d="M4.2 6.1 L6.5 9.1 L10.7 4" fill="none" stroke="#000" stroke-width="2.05" stroke-linejoin="round" stroke-linecap="round"/></svg>
<div class="t" style="left:189.2px;top:440.75px;font-size:11px;line-height:11px;color:#2d4f88;font-weight:normal;transform:scaleY(1.09);transform-origin:0 9.31px;-webkit-text-stroke:0.15px #2d4f88;">BC04</div>
<div class="t" style="left:243.79999999999998px;top:440.75px;font-size:11px;line-height:11px;color:#2d4f88;font-weight:normal;transform:scaleY(1.09);transform-origin:0 9.31px;-webkit-text-stroke:0.15px #2d4f88;">ADRIANA</div>
<div class="t" style="left:688.5px;top:440.75px;font-size:11px;line-height:11px;color:#2d4f88;font-weight:normal;transform:translateX(-50%) scaleY(1.09);transform-origin:0 9.31px;-webkit-text-stroke:0.15px #2d4f88;">A</div>
<div class="t" style="left:719.2px;top:440.75px;font-size:11px;line-height:11px;color:#2d4f88;font-weight:normal;transform:scaleY(1.09);transform-origin:0 9.31px;-webkit-text-stroke:0.15px #2d4f88;">01/01/2024</div>
<div class="t" style="left:814.0px;top:440.75px;font-size:11px;line-height:11px;color:#2d4f88;font-weight:normal;width:28px;overflow:hidden;padding-top:5px;margin-top:-5px;padding-bottom:3px;transform:scaleY(1.09);transform-origin:0 14.31px;-webkit-text-stroke:0.15px #2d4f88;">JUFA7</div>
<div class="t" style="left:923.2px;top:440.75px;font-size:11px;line-height:11px;color:#2d4f88;font-weight:normal;transform:scaleY(1.09);transform-origin:0 9.31px;-webkit-text-stroke:0.15px #2d4f88;">N/A</div>
<div class="t" style="left:1048.8px;top:440.75px;font-size:11px;line-height:11px;color:#2d4f88;font-weight:normal;transform:scaleY(1.09);transform-origin:0 9.31px;-webkit-text-stroke:0.15px #2d4f88;">(Vacío)</div>
<div class="t" style="left:1205.1000000000001px;top:440.75px;font-size:11px;line-height:11px;color:#2d4f88;font-weight:normal;transform:scaleY(1.09);transform-origin:0 9.31px;-webkit-text-stroke:0.15px #2d4f88;">pruebas@gmail.com</div>
<div class="t" style="left:1330.2px;top:440.75px;font-size:11px;line-height:11px;color:#2d4f88;font-weight:normal;transform:scaleY(1.09);transform-origin:0 9.31px;-webkit-text-stroke:0.15px #2d4f88;">Ejecutivo de</div>
<div class="t" style="left:1440.2px;top:440.75px;font-size:11px;line-height:11px;color:#2d4f88;font-weight:normal;transform:scaleY(1.09);transform-origin:0 9.31px;-webkit-text-stroke:0.15px #2d4f88;">Recursos Humanos</div>
<div class="r" style="left:154px;top:478.75px;width:1392px;height:1px;background:#ededed"></div>
<div class="r" style="left:156.8px;top:459.70px;width:14px;height:13.8px;box-sizing:border-box;border-top:2px solid #8a8a8a;border-left:2px solid #8a8a8a;border-right:1px solid #e8e8e8;border-bottom:1px solid #e8e8e8;background:#fff"></div>
<svg class="r" style="left:156.8px;top:459.70px" width="14" height="14" viewBox="0 0 14 14"><path d="M4.2 6.1 L6.5 9.1 L10.7 4" fill="none" stroke="#000" stroke-width="2.05" stroke-linejoin="round" stroke-linecap="round"/></svg>
<div class="t" style="left:189.2px;top:463.27px;font-size:11px;line-height:11px;color:#2d4f88;font-weight:normal;transform:scaleY(1.09);transform-origin:0 9.31px;-webkit-text-stroke:0.15px #2d4f88;">CD05</div>
<div class="t" style="left:243.79999999999998px;top:463.27px;font-size:11px;line-height:11px;color:#2d4f88;font-weight:normal;transform:scaleY(1.09);transform-origin:0 9.31px;-webkit-text-stroke:0.15px #2d4f88;">OSCAR</div>
<div class="t" style="left:688.5px;top:463.27px;font-size:11px;line-height:11px;color:#2d4f88;font-weight:normal;transform:translateX(-50%) scaleY(1.09);transform-origin:0 9.31px;-webkit-text-stroke:0.15px #2d4f88;">A</div>
<div class="t" style="left:719.2px;top:463.27px;font-size:11px;line-height:11px;color:#2d4f88;font-weight:normal;transform:scaleY(1.09);transform-origin:0 9.31px;-webkit-text-stroke:0.15px #2d4f88;">01/01/2024</div>
<div class="t" style="left:814.0px;top:463.27px;font-size:11px;line-height:11px;color:#2d4f88;font-weight:normal;width:28px;overflow:hidden;padding-top:5px;margin-top:-5px;padding-bottom:3px;transform:scaleY(1.09);transform-origin:0 14.31px;-webkit-text-stroke:0.15px #2d4f88;">KAHO</div>
<div class="t" style="left:923.2px;top:463.27px;font-size:11px;line-height:11px;color:#2d4f88;font-weight:normal;transform:scaleY(1.09);transform-origin:0 9.31px;-webkit-text-stroke:0.15px #2d4f88;">N/A</div>
<div class="t" style="left:1048.8px;top:463.27px;font-size:11px;line-height:11px;color:#2d4f88;font-weight:normal;transform:scaleY(1.09);transform-origin:0 9.31px;-webkit-text-stroke:0.15px #2d4f88;">BC04 - ADRIANA</div>
<div class="t" style="left:1205.1000000000001px;top:463.27px;font-size:11px;line-height:11px;color:#2d4f88;font-weight:normal;transform:scaleY(1.09);transform-origin:0 9.31px;-webkit-text-stroke:0.15px #2d4f88;">pruebas@gmail.com</div>
<div class="t" style="left:1330.2px;top:463.27px;font-size:11px;line-height:11px;color:#2d4f88;font-weight:normal;transform:scaleY(1.09);transform-origin:0 9.31px;-webkit-text-stroke:0.15px #2d4f88;">Operador de</div>
<div class="t" style="left:1440.2px;top:463.27px;font-size:11px;line-height:11px;color:#2d4f88;font-weight:normal;transform:scaleY(1.09);transform-origin:0 9.31px;-webkit-text-stroke:0.15px #2d4f88;">Producción</div>
<div class="r" style="left:154px;top:501.30px;width:1392px;height:1px;background:#ededed"></div>
<div class="r" style="left:156.8px;top:482.25px;width:14px;height:13.8px;box-sizing:border-box;border-top:2px solid #8a8a8a;border-left:2px solid #8a8a8a;border-right:1px solid #e8e8e8;border-bottom:1px solid #e8e8e8;background:#fff"></div>
<svg class="r" style="left:156.8px;top:482.25px" width="14" height="14" viewBox="0 0 14 14"><path d="M4.2 6.1 L6.5 9.1 L10.7 4" fill="none" stroke="#000" stroke-width="2.05" stroke-linejoin="round" stroke-linecap="round"/></svg>
<div class="t" style="left:189.2px;top:485.79px;font-size:11px;line-height:11px;color:#2d4f88;font-weight:normal;transform:scaleY(1.09);transform-origin:0 9.31px;-webkit-text-stroke:0.15px #2d4f88;">DE06</div>
<div class="t" style="left:243.79999999999998px;top:485.79px;font-size:11px;line-height:11px;color:#2d4f88;font-weight:normal;transform:scaleY(1.09);transform-origin:0 9.31px;-webkit-text-stroke:0.15px #2d4f88;">RODRIGO</div>
<div class="t" style="left:688.5px;top:485.79px;font-size:11px;line-height:11px;color:#2d4f88;font-weight:normal;transform:translateX(-50%) scaleY(1.09);transform-origin:0 9.31px;-webkit-text-stroke:0.15px #2d4f88;">A</div>
<div class="t" style="left:719.2px;top:485.79px;font-size:11px;line-height:11px;color:#2d4f88;font-weight:normal;transform:scaleY(1.09);transform-origin:0 9.31px;-webkit-text-stroke:0.15px #2d4f88;">01/01/2024</div>
<div class="t" style="left:814.0px;top:485.79px;font-size:11px;line-height:11px;color:#2d4f88;font-weight:normal;width:28px;overflow:hidden;padding-top:5px;margin-top:-5px;padding-bottom:3px;transform:scaleY(1.09);transform-origin:0 14.31px;-webkit-text-stroke:0.15px #2d4f88;">KICR63</div>
<div class="t" style="left:923.2px;top:485.79px;font-size:11px;line-height:11px;color:#2d4f88;font-weight:normal;transform:scaleY(1.09);transform-origin:0 9.31px;-webkit-text-stroke:0.15px #2d4f88;">N/A</div>
<div class="t" style="left:1048.8px;top:485.79px;font-size:11px;line-height:11px;color:#2d4f88;font-weight:normal;transform:scaleY(1.09);transform-origin:0 9.31px;-webkit-text-stroke:0.15px #2d4f88;">BC04 - ADRIANA</div>
<div class="t" style="left:1205.1000000000001px;top:485.79px;font-size:11px;line-height:11px;color:#2d4f88;font-weight:normal;transform:scaleY(1.09);transform-origin:0 9.31px;-webkit-text-stroke:0.15px #2d4f88;">pruebas@gmail.com</div>
<div class="t" style="left:1330.2px;top:485.79px;font-size:11px;line-height:11px;color:#2d4f88;font-weight:normal;transform:scaleY(1.09);transform-origin:0 9.31px;-webkit-text-stroke:0.15px #2d4f88;">Ejecutivo de Crédito</div>
<div class="t" style="left:1440.2px;top:485.79px;font-size:11px;line-height:11px;color:#2d4f88;font-weight:normal;transform:scaleY(1.09);transform-origin:0 9.31px;-webkit-text-stroke:0.15px #2d4f88;">Crédito y Cobranza</div>
<div class="r" style="left:154px;top:523.85px;width:1392px;height:1px;background:#ededed"></div>
<div class="r" style="left:156.8px;top:504.80px;width:14px;height:13.8px;box-sizing:border-box;border-top:2px solid #8a8a8a;border-left:2px solid #8a8a8a;border-right:1px solid #e8e8e8;border-bottom:1px solid #e8e8e8;background:#fff"></div>
<svg class="r" style="left:156.8px;top:504.80px" width="14" height="14" viewBox="0 0 14 14"><path d="M4.2 6.1 L6.5 9.1 L10.7 4" fill="none" stroke="#000" stroke-width="2.05" stroke-linejoin="round" stroke-linecap="round"/></svg>
<div class="t" style="left:189.2px;top:508.31px;font-size:11px;line-height:11px;color:#2d4f88;font-weight:normal;transform:scaleY(1.09);transform-origin:0 9.31px;-webkit-text-stroke:0.15px #2d4f88;">EF07</div>
<div class="t" style="left:243.79999999999998px;top:508.31px;font-size:11px;line-height:11px;color:#2d4f88;font-weight:normal;transform:scaleY(1.09);transform-origin:0 9.31px;-webkit-text-stroke:0.15px #2d4f88;">CECILIA</div>
<div class="t" style="left:688.5px;top:508.31px;font-size:11px;line-height:11px;color:#2d4f88;font-weight:normal;transform:translateX(-50%) scaleY(1.09);transform-origin:0 9.31px;-webkit-text-stroke:0.15px #2d4f88;">A</div>
<div class="t" style="left:719.2px;top:508.31px;font-size:11px;line-height:11px;color:#2d4f88;font-weight:normal;transform:scaleY(1.09);transform-origin:0 9.31px;-webkit-text-stroke:0.15px #2d4f88;">01/01/2024</div>
<div class="t" style="left:814.0px;top:508.31px;font-size:11px;line-height:11px;color:#2d4f88;font-weight:normal;width:28px;overflow:hidden;padding-top:5px;margin-top:-5px;padding-bottom:3px;transform:scaleY(1.09);transform-origin:0 14.31px;-webkit-text-stroke:0.15px #2d4f88;">MISC4</div>
<div class="t" style="left:923.2px;top:508.31px;font-size:11px;line-height:11px;color:#2d4f88;font-weight:normal;transform:scaleY(1.09);transform-origin:0 9.31px;-webkit-text-stroke:0.15px #2d4f88;">N/A</div>
<div class="t" style="left:1048.8px;top:508.31px;font-size:11px;line-height:11px;color:#2d4f88;font-weight:normal;transform:scaleY(1.09);transform-origin:0 9.31px;-webkit-text-stroke:0.15px #2d4f88;">BC04 - ADRIANA.</div>
<div class="t" style="left:1205.1000000000001px;top:508.31px;font-size:11px;line-height:11px;color:#2d4f88;font-weight:normal;transform:scaleY(1.09);transform-origin:0 9.31px;-webkit-text-stroke:0.15px #2d4f88;">pruebas@gmail.com</div>
<div class="t" style="left:1330.2px;top:508.31px;font-size:11px;line-height:11px;color:#2d4f88;font-weight:normal;transform:scaleY(1.09);transform-origin:0 9.31px;-webkit-text-stroke:0.15px #2d4f88;">Ejecutivo de Crédito</div>
<div class="t" style="left:1440.2px;top:508.31px;font-size:11px;line-height:11px;color:#2d4f88;font-weight:normal;transform:scaleY(1.09);transform-origin:0 9.31px;-webkit-text-stroke:0.15px #2d4f88;">Crédito y Cobranza</div>
<div class="r" style="left:154px;top:546.40px;width:1392px;height:1px;background:#ededed"></div>
<div class="r" style="left:156.8px;top:527.35px;width:14px;height:13.8px;box-sizing:border-box;border-top:2px solid #8a8a8a;border-left:2px solid #8a8a8a;border-right:1px solid #e8e8e8;border-bottom:1px solid #e8e8e8;background:#fff"></div>
<svg class="r" style="left:156.8px;top:527.35px" width="14" height="14" viewBox="0 0 14 14"><path d="M4.2 6.1 L6.5 9.1 L10.7 4" fill="none" stroke="#000" stroke-width="2.05" stroke-linejoin="round" stroke-linecap="round"/></svg>
<div class="t" style="left:189.2px;top:530.83px;font-size:11px;line-height:11px;color:#2d4f88;font-weight:normal;transform:scaleY(1.09);transform-origin:0 9.31px;-webkit-text-stroke:0.15px #2d4f88;">FG08</div>
<div class="t" style="left:243.79999999999998px;top:530.83px;font-size:11px;line-height:11px;color:#2d4f88;font-weight:normal;transform:scaleY(1.09);transform-origin:0 9.31px;-webkit-text-stroke:0.15px #2d4f88;">MARIA</div>
<div class="t" style="left:688.5px;top:530.83px;font-size:11px;line-height:11px;color:#2d4f88;font-weight:normal;transform:translateX(-50%) scaleY(1.09);transform-origin:0 9.31px;-webkit-text-stroke:0.15px #2d4f88;">A</div>
<div class="t" style="left:719.2px;top:530.83px;font-size:11px;line-height:11px;color:#2d4f88;font-weight:normal;transform:scaleY(1.09);transform-origin:0 9.31px;-webkit-text-stroke:0.15px #2d4f88;">01/01/2024</div>
<div class="t" style="left:814.0px;top:530.83px;font-size:11px;line-height:11px;color:#2d4f88;font-weight:normal;width:28px;overflow:hidden;padding-top:5px;margin-top:-5px;padding-bottom:3px;transform:scaleY(1.09);transform-origin:0 14.31px;-webkit-text-stroke:0.15px #2d4f88;">WATM</div>
<div class="t" style="left:923.2px;top:530.83px;font-size:11px;line-height:11px;color:#2d4f88;font-weight:normal;transform:scaleY(1.09);transform-origin:0 9.31px;-webkit-text-stroke:0.15px #2d4f88;">N/A</div>
<div class="t" style="left:1048.8px;top:530.83px;font-size:11px;line-height:11px;color:#2d4f88;font-weight:normal;transform:scaleY(1.09);transform-origin:0 9.31px;-webkit-text-stroke:0.15px #2d4f88;">BC04 - ADRIANA</div>
<div class="t" style="left:1205.1000000000001px;top:530.83px;font-size:11px;line-height:11px;color:#2d4f88;font-weight:normal;transform:scaleY(1.09);transform-origin:0 9.31px;-webkit-text-stroke:0.15px #2d4f88;">pruebas@gmail.com</div>
<div class="t" style="left:1330.2px;top:530.83px;font-size:11px;line-height:11px;color:#2d4f88;font-weight:normal;transform:scaleY(1.09);transform-origin:0 9.31px;-webkit-text-stroke:0.15px #2d4f88;">Operador de</div>
<div class="t" style="left:1440.2px;top:530.83px;font-size:11px;line-height:11px;color:#2d4f88;font-weight:normal;transform:scaleY(1.09);transform-origin:0 9.31px;-webkit-text-stroke:0.15px #2d4f88;">Producción</div>
<div class="r" style="left:154px;top:568.95px;width:1392px;height:1px;background:#ededed"></div>
<div class="r" style="left:156.8px;top:549.90px;width:14px;height:13.8px;box-sizing:border-box;border-top:2px solid #8a8a8a;border-left:2px solid #8a8a8a;border-right:1px solid #e8e8e8;border-bottom:1px solid #e8e8e8;background:#fff"></div>
<svg class="r" style="left:156.8px;top:549.90px" width="14" height="14" viewBox="0 0 14 14"><path d="M4.2 6.1 L6.5 9.1 L10.7 4" fill="none" stroke="#000" stroke-width="2.05" stroke-linejoin="round" stroke-linecap="round"/></svg>
<div class="t" style="left:189.2px;top:553.35px;font-size:11px;line-height:11px;color:#2d4f88;font-weight:normal;transform:scaleY(1.09);transform-origin:0 9.31px;-webkit-text-stroke:0.15px #2d4f88;">GH09</div>
<div class="t" style="left:243.79999999999998px;top:553.35px;font-size:11px;line-height:11px;color:#2d4f88;font-weight:normal;transform:scaleY(1.09);transform-origin:0 9.31px;-webkit-text-stroke:0.15px #2d4f88;">XAIME</div>
<div class="t" style="left:688.5px;top:553.35px;font-size:11px;line-height:11px;color:#2d4f88;font-weight:normal;transform:translateX(-50%) scaleY(1.09);transform-origin:0 9.31px;-webkit-text-stroke:0.15px #2d4f88;">A</div>
<div class="t" style="left:719.2px;top:553.35px;font-size:11px;line-height:11px;color:#2d4f88;font-weight:normal;transform:scaleY(1.09);transform-origin:0 9.31px;-webkit-text-stroke:0.15px #2d4f88;">01/01/2024</div>
<div class="t" style="left:814.0px;top:553.35px;font-size:11px;line-height:11px;color:#2d4f88;font-weight:normal;width:28px;overflow:hidden;padding-top:5px;margin-top:-5px;padding-bottom:3px;transform:scaleY(1.09);transform-origin:0 14.31px;-webkit-text-stroke:0.15px #2d4f88;">WERX</div>
<div class="t" style="left:923.2px;top:553.35px;font-size:11px;line-height:11px;color:#2d4f88;font-weight:normal;transform:scaleY(1.09);transform-origin:0 9.31px;-webkit-text-stroke:0.15px #2d4f88;">N/A</div>
<div class="t" style="left:1048.8px;top:553.35px;font-size:11px;line-height:11px;color:#2d4f88;font-weight:normal;transform:scaleY(1.09);transform-origin:0 9.31px;-webkit-text-stroke:0.15px #2d4f88;">BC04 - ADRIANA</div>
<div class="t" style="left:1205.1000000000001px;top:553.35px;font-size:11px;line-height:11px;color:#2d4f88;font-weight:normal;transform:scaleY(1.09);transform-origin:0 9.31px;-webkit-text-stroke:0.15px #2d4f88;">pruebas@gmail.com</div>
<div class="t" style="left:1330.2px;top:553.35px;font-size:11px;line-height:11px;color:#2d4f88;font-weight:normal;transform:scaleY(1.09);transform-origin:0 9.31px;-webkit-text-stroke:0.15px #2d4f88;">Ejecutivo de</div>
<div class="t" style="left:1440.2px;top:553.35px;font-size:11px;line-height:11px;color:#2d4f88;font-weight:normal;transform:scaleY(1.09);transform-origin:0 9.31px;-webkit-text-stroke:0.15px #2d4f88;">Investigación y</div>
<div class="r" style="left:154px;top:591.50px;width:1392px;height:1px;background:#ededed"></div>
<div class="r" style="left:156.8px;top:572.45px;width:14px;height:13.8px;box-sizing:border-box;border-top:2px solid #8a8a8a;border-left:2px solid #8a8a8a;border-right:1px solid #e8e8e8;border-bottom:1px solid #e8e8e8;background:#fff"></div>
<svg class="r" style="left:156.8px;top:572.45px" width="14" height="14" viewBox="0 0 14 14"><path d="M4.2 6.1 L6.5 9.1 L10.7 4" fill="none" stroke="#000" stroke-width="2.05" stroke-linejoin="round" stroke-linecap="round"/></svg>
<div class="t" style="left:189.2px;top:575.87px;font-size:11px;line-height:11px;color:#2d4f88;font-weight:normal;transform:scaleY(1.09);transform-origin:0 9.31px;-webkit-text-stroke:0.15px #2d4f88;">HI10</div>
<div class="t" style="left:243.79999999999998px;top:575.87px;font-size:11px;line-height:11px;color:#2d4f88;font-weight:normal;transform:scaleY(1.09);transform-origin:0 9.31px;-webkit-text-stroke:0.15px #2d4f88;">ALBA</div>
<div class="t" style="left:688.5px;top:575.87px;font-size:11px;line-height:11px;color:#2d4f88;font-weight:normal;transform:translateX(-50%) scaleY(1.09);transform-origin:0 9.31px;-webkit-text-stroke:0.15px #2d4f88;">A</div>
<div class="t" style="left:719.2px;top:575.87px;font-size:11px;line-height:11px;color:#2d4f88;font-weight:normal;transform:scaleY(1.09);transform-origin:0 9.31px;-webkit-text-stroke:0.15px #2d4f88;">01/01/2024</div>
<div class="t" style="left:814.0px;top:575.87px;font-size:11px;line-height:11px;color:#2d4f88;font-weight:normal;width:28px;overflow:hidden;padding-top:5px;margin-top:-5px;padding-bottom:3px;transform:scaleY(1.09);transform-origin:0 14.31px;-webkit-text-stroke:0.15px #2d4f88;">XAMA</div>
<div class="t" style="left:923.2px;top:575.87px;font-size:11px;line-height:11px;color:#2d4f88;font-weight:normal;transform:scaleY(1.09);transform-origin:0 9.31px;-webkit-text-stroke:0.15px #2d4f88;">N/A</div>
<div class="t" style="left:1048.8px;top:575.87px;font-size:11px;line-height:11px;color:#2d4f88;font-weight:normal;transform:scaleY(1.09);transform-origin:0 9.31px;-webkit-text-stroke:0.15px #2d4f88;">BC04 - ADRIANA</div>
<div class="t" style="left:1205.1000000000001px;top:575.87px;font-size:11px;line-height:11px;color:#2d4f88;font-weight:normal;transform:scaleY(1.09);transform-origin:0 9.31px;-webkit-text-stroke:0.15px #2d4f88;">pruebas@gmail.com</div>
<div class="t" style="left:1330.2px;top:575.87px;font-size:11px;line-height:11px;color:#2d4f88;font-weight:normal;transform:scaleY(1.09);transform-origin:0 9.31px;-webkit-text-stroke:0.15px #2d4f88;">Ejecutivo de Ventas</div>
<div class="t" style="left:1440.2px;top:575.87px;font-size:11px;line-height:11px;color:#2d4f88;font-weight:normal;transform:scaleY(1.09);transform-origin:0 9.31px;-webkit-text-stroke:0.15px #2d4f88;">Ventas</div>
<div class="r" style="left:154px;top:614.05px;width:1392px;height:1px;background:#ededed"></div>
<div class="r" style="left:156.8px;top:595.00px;width:14px;height:13.8px;box-sizing:border-box;border-top:2px solid #8a8a8a;border-left:2px solid #8a8a8a;border-right:1px solid #e8e8e8;border-bottom:1px solid #e8e8e8;background:#fff"></div>
<svg class="r" style="left:156.8px;top:595.00px" width="14" height="14" viewBox="0 0 14 14"><path d="M4.2 6.1 L6.5 9.1 L10.7 4" fill="none" stroke="#000" stroke-width="2.05" stroke-linejoin="round" stroke-linecap="round"/></svg>
<div class="t" style="left:189.2px;top:598.39px;font-size:11px;line-height:11px;color:#2d4f88;font-weight:normal;transform:scaleY(1.09);transform-origin:0 9.31px;-webkit-text-stroke:0.15px #2d4f88;">IJ11</div>
<div class="t" style="left:243.79999999999998px;top:598.39px;font-size:11px;line-height:11px;color:#2d4f88;font-weight:normal;transform:scaleY(1.09);transform-origin:0 9.31px;-webkit-text-stroke:0.15px #2d4f88;">BERENICE</div>
<div class="t" style="left:688.5px;top:598.39px;font-size:11px;line-height:11px;color:#2d4f88;font-weight:normal;transform:translateX(-50%) scaleY(1.09);transform-origin:0 9.31px;-webkit-text-stroke:0.15px #2d4f88;">A</div>
<div class="t" style="left:719.2px;top:598.39px;font-size:11px;line-height:11px;color:#2d4f88;font-weight:normal;transform:scaleY(1.09);transform-origin:0 9.31px;-webkit-text-stroke:0.15px #2d4f88;">01/01/2024</div>
<div class="t" style="left:814.0px;top:598.39px;font-size:11px;line-height:11px;color:#2d4f88;font-weight:normal;width:28px;overflow:hidden;padding-top:5px;margin-top:-5px;padding-bottom:3px;transform:scaleY(1.09);transform-origin:0 14.31px;-webkit-text-stroke:0.15px #2d4f88;">XIQB8</div>
<div class="t" style="left:923.2px;top:598.39px;font-size:11px;line-height:11px;color:#2d4f88;font-weight:normal;transform:scaleY(1.09);transform-origin:0 9.31px;-webkit-text-stroke:0.15px #2d4f88;">N/A</div>
<div class="t" style="left:1048.8px;top:598.39px;font-size:11px;line-height:11px;color:#2d4f88;font-weight:normal;transform:scaleY(1.09);transform-origin:0 9.31px;-webkit-text-stroke:0.15px #2d4f88;">BC04 - ADRIANA</div>
<div class="t" style="left:1205.1000000000001px;top:598.39px;font-size:11px;line-height:11px;color:#2d4f88;font-weight:normal;transform:scaleY(1.09);transform-origin:0 9.31px;-webkit-text-stroke:0.15px #2d4f88;">pruebas@gmail.com</div>
<div class="t" style="left:1330.2px;top:598.39px;font-size:11px;line-height:11px;color:#2d4f88;font-weight:normal;transform:scaleY(1.09);transform-origin:0 9.31px;-webkit-text-stroke:0.15px #2d4f88;">Ejecutivo de</div>
<div class="t" style="left:1440.2px;top:598.39px;font-size:11px;line-height:11px;color:#2d4f88;font-weight:normal;transform:scaleY(1.09);transform-origin:0 9.31px;-webkit-text-stroke:0.15px #2d4f88;">Marketing</div>
<div class="r" style="left:154px;top:636.60px;width:1392px;height:1px;background:#ededed"></div>
<div class="r" style="left:156.8px;top:617.55px;width:14px;height:13.8px;box-sizing:border-box;border-top:2px solid #8a8a8a;border-left:2px solid #8a8a8a;border-right:1px solid #e8e8e8;border-bottom:1px solid #e8e8e8;background:#fff"></div>
<svg class="r" style="left:156.8px;top:617.55px" width="14" height="14" viewBox="0 0 14 14"><path d="M4.2 6.1 L6.5 9.1 L10.7 4" fill="none" stroke="#000" stroke-width="2.05" stroke-linejoin="round" stroke-linecap="round"/></svg>
<div class="t" style="left:189.2px;top:620.91px;font-size:11px;line-height:11px;color:#2d4f88;font-weight:normal;transform:scaleY(1.09);transform-origin:0 9.31px;-webkit-text-stroke:0.15px #2d4f88;">JK12</div>
<div class="t" style="left:243.79999999999998px;top:620.91px;font-size:11px;line-height:11px;color:#2d4f88;font-weight:normal;transform:scaleY(1.09);transform-origin:0 9.31px;-webkit-text-stroke:0.15px #2d4f88;">INGRID</div>
<div class="t" style="left:688.5px;top:620.91px;font-size:11px;line-height:11px;color:#2d4f88;font-weight:normal;transform:translateX(-50%) scaleY(1.09);transform-origin:0 9.31px;-webkit-text-stroke:0.15px #2d4f88;">A</div>
<div class="t" style="left:719.2px;top:620.91px;font-size:11px;line-height:11px;color:#2d4f88;font-weight:normal;transform:scaleY(1.09);transform-origin:0 9.31px;-webkit-text-stroke:0.15px #2d4f88;">01/01/2024</div>
<div class="t" style="left:814.0px;top:620.91px;font-size:11px;line-height:11px;color:#2d4f88;font-weight:normal;width:28px;overflow:hidden;padding-top:5px;margin-top:-5px;padding-bottom:3px;transform:scaleY(1.09);transform-origin:0 14.31px;-webkit-text-stroke:0.15px #2d4f88;">XOJI7</div>
<div class="t" style="left:923.2px;top:620.91px;font-size:11px;line-height:11px;color:#2d4f88;font-weight:normal;transform:scaleY(1.09);transform-origin:0 9.31px;-webkit-text-stroke:0.15px #2d4f88;">N/A</div>
<div class="t" style="left:1048.8px;top:620.91px;font-size:11px;line-height:11px;color:#2d4f88;font-weight:normal;transform:scaleY(1.09);transform-origin:0 9.31px;-webkit-text-stroke:0.15px #2d4f88;">BC04 - ADRIANA</div>
<div class="t" style="left:1205.1000000000001px;top:620.91px;font-size:11px;line-height:11px;color:#2d4f88;font-weight:normal;transform:scaleY(1.09);transform-origin:0 9.31px;-webkit-text-stroke:0.15px #2d4f88;">pruebas@gmail.com</div>
<div class="t" style="left:1330.2px;top:620.91px;font-size:11px;line-height:11px;color:#2d4f88;font-weight:normal;transform:scaleY(1.09);transform-origin:0 9.31px;-webkit-text-stroke:0.15px #2d4f88;">Ejecutivo de</div>
<div class="t" style="left:1440.2px;top:620.91px;font-size:11px;line-height:11px;color:#2d4f88;font-weight:normal;transform:scaleY(1.09);transform-origin:0 9.31px;-webkit-text-stroke:0.15px #2d4f88;">Recursos Humanos</div>
<div class="r" style="left:184.5px;top:367px;width:1px;height:270.60px;background:#ededed"></div>
<div class="r" style="left:239.1px;top:367px;width:1px;height:270.60px;background:#ededed"></div>
<div class="r" style="left:379.5px;top:367px;width:1px;height:270.60px;background:#ededed"></div>
<div class="r" style="left:520.5px;top:367px;width:1px;height:270.60px;background:#ededed"></div>
<div class="r" style="left:661.0px;top:367px;width:1px;height:270.60px;background:#ededed"></div>
<div class="r" style="left:714.5px;top:367px;width:1px;height:270.60px;background:#ededed"></div>
<div class="r" style="left:809.3px;top:367px;width:1px;height:270.60px;background:#ededed"></div>
<div class="r" style="left:918.5px;top:367px;width:1px;height:270.60px;background:#ededed"></div>
<div class="r" style="left:1044.1px;top:367px;width:1px;height:270.60px;background:#ededed"></div>
<div class="r" style="left:1200.4px;top:367px;width:1px;height:270.60px;background:#ededed"></div>
<div class="r" style="left:1325.5px;top:367px;width:1px;height:270.60px;background:#ededed"></div>
<div class="r" style="left:1435.5px;top:367px;width:1px;height:270.60px;background:#ededed"></div>
<div class="r" style="left:1544.5px;top:367px;width:1px;height:270.60px;background:#ededed"></div>
<div class="r" style="left:156.4px;top:334.4px;width:13.6px;height:13.6px;box-sizing:border-box;border-top:2px solid #8a8a8a;border-left:2px solid #8a8a8a;border-right:1px solid #e8e8e8;border-bottom:1px solid #e8e8e8;background:#fff"></div>
<div class="t" style="left:154.5px;top:810.07px;font-size:13.5px;line-height:13.5px;color:#3d6fc0;font-weight:normal;">Total empleados: 12</div>
<div class="t" style="left:308.7px;top:810.07px;font-size:13.5px;line-height:13.5px;color:#3d6fc0;font-weight:normal;">Total empleados filtrados: 0</div>
<div class="r" style="left:152.9px;top:829.7px;width:1442.6999999999998px;height:1.8999999999999773px;background:#a8a8a8;"></div>
<div class="r" style="left:1594.2px;top:806px;width:1.3999999999998636px;height:25.600000000000023px;background:#a8a8a8;"></div>
<div class="r" style="left:148.4px;top:834px;width:1451.6px;height:1.8999999999999773px;background:#828282;"></div>
<div class="r" style="left:1597.6px;top:236px;width:2.400000000000091px;height:599.9px;background:#828282;"></div>
<div class="r" style="left:35px;top:841.8px;width:1573px;height:2.5px;background:#cdcdcd;"></div>
<div class="r" style="left:33px;top:844.9px;width:1577px;height:1.2000000000000455px;background:#b4c4ce;"></div>
<svg class="r dash" style="left:31px;top:5px" width="253" height="36.8"><g fill="#003472"><rect x="2.00" y="2.00" width="1.04" height="3.00"/><rect x="7.00" y="2.00" width="7.00" height="3.00"/><rect x="17.96" y="2.00" width="7.00" height="3.00"/><rect x="28.92" y="2.00" width="7.00" height="3.00"/><rect x="39.88" y="2.00" width="7.00" height="3.00"/><rect x="50.84" y="2.00" width="7.00" height="3.00"/><rect x="61.80" y="2.00" width="7.00" height="3.00"/><rect x="72.76" y="2.00" width="7.00" height="3.00"/><rect x="83.72" y="2.00" width="7.00" height="3.00"/><rect x="94.68" y="2.00" width="7.00" height="3.00"/><rect x="105.64" y="2.00" width="7.00" height="3.00"/><rect x="116.60" y="2.00" width="7.00" height="3.00"/><rect x="127.56" y="2.00" width="7.00" height="3.00"/><rect x="138.52" y="2.00" width="7.00" height="3.00"/><rect x="149.48" y="2.00" width="7.00" height="3.00"/><rect x="160.44" y="2.00" width="7.00" height="3.00"/><rect x="171.40" y="2.00" width="7.00" height="3.00"/><rect x="182.36" y="2.00" width="7.00" height="3.00"/><rect x="193.32" y="2.00" width="7.00" height="3.00"/><rect x="204.28" y="2.00" width="7.00" height="3.00"/><rect x="215.24" y="2.00" width="7.00" height="3.00"/><rect x="226.20" y="2.00" width="7.00" height="3.00"/><rect x="237.16" y="2.00" width="7.00" height="3.00"/><rect x="2.00" y="27.80" width="4.04" height="3.00"/><rect x="10.00" y="27.80" width="7.00" height="3.00"/><rect x="20.96" y="27.80" width="7.00" height="3.00"/><rect x="31.92" y="27.80" width="7.00" height="3.00"/><rect x="42.88" y="27.80" width="7.00" height="3.00"/><rect x="53.84" y="27.80" width="7.00" height="3.00"/><rect x="64.80" y="27.80" width="7.00" height="3.00"/><rect x="75.76" y="27.80" width="7.00" height="3.00"/><rect x="86.72" y="27.80" width="7.00" height="3.00"/><rect x="97.68" y="27.80" width="7.00" height="3.00"/><rect x="108.64" y="27.80" width="7.00" height="3.00"/><rect x="119.60" y="27.80" width="7.00" height="3.00"/><rect x="130.56" y="27.80" width="7.00" height="3.00"/><rect x="141.52" y="27.80" width="7.00" height="3.00"/><rect x="152.48" y="27.80" width="7.00" height="3.00"/><rect x="163.44" y="27.80" width="7.00" height="3.00"/><rect x="174.40" y="27.80" width="7.00" height="3.00"/><rect x="185.36" y="27.80" width="7.00" height="3.00"/><rect x="196.32" y="27.80" width="7.00" height="3.00"/><rect x="207.28" y="27.80" width="7.00" height="3.00"/><rect x="218.24" y="27.80" width="7.00" height="3.00"/><rect x="229.20" y="27.80" width="7.00" height="3.00"/><rect x="240.16" y="27.80" width="6.84" height="3.00"/><rect x="2.00" y="2.00" width="3.00" height="7.00"/><rect x="2.00" y="12.96" width="3.00" height="7.00"/><rect x="2.00" y="23.92" width="3.00" height="6.88"/><rect x="244.00" y="2.00" width="3.00" height="0.04"/><rect x="244.00" y="6.00" width="3.00" height="7.00"/><rect x="244.00" y="16.96" width="3.00" height="7.00"/><rect x="244.00" y="27.92" width="3.00" height="2.88"/></g></svg>
<svg class="r dash" style="left:269px;top:30px" width="132" height="61"><g fill="#003472"><rect x="2.00" y="2.00" width="4.04" height="3.00"/><rect x="10.00" y="2.00" width="7.00" height="3.00"/><rect x="20.96" y="2.00" width="7.00" height="3.00"/><rect x="31.92" y="2.00" width="7.00" height="3.00"/><rect x="42.88" y="2.00" width="7.00" height="3.00"/><rect x="53.84" y="2.00" width="7.00" height="3.00"/><rect x="64.80" y="2.00" width="7.00" height="3.00"/><rect x="75.76" y="2.00" width="7.00" height="3.00"/><rect x="86.72" y="2.00" width="7.00" height="3.00"/><rect x="97.68" y="2.00" width="7.00" height="3.00"/><rect x="108.64" y="2.00" width="7.00" height="3.00"/><rect x="119.60" y="2.00" width="6.40" height="3.00"/><rect x="2.00" y="52.00" width="1.04" height="3.00"/><rect x="7.00" y="52.00" width="7.00" height="3.00"/><rect x="17.96" y="52.00" width="7.00" height="3.00"/><rect x="28.92" y="52.00" width="7.00" height="3.00"/><rect x="39.88" y="52.00" width="7.00" height="3.00"/><rect x="50.84" y="52.00" width="7.00" height="3.00"/><rect x="61.80" y="52.00" width="7.00" height="3.00"/><rect x="72.76" y="52.00" width="7.00" height="3.00"/><rect x="83.72" y="52.00" width="7.00" height="3.00"/><rect x="94.68" y="52.00" width="7.00" height="3.00"/><rect x="105.64" y="52.00" width="7.00" height="3.00"/><rect x="116.60" y="52.00" width="7.00" height="3.00"/><rect x="2.00" y="2.00" width="3.00" height="7.00"/><rect x="2.00" y="12.96" width="3.00" height="7.00"/><rect x="2.00" y="23.92" width="3.00" height="7.00"/><rect x="2.00" y="34.88" width="3.00" height="7.00"/><rect x="2.00" y="45.84" width="3.00" height="7.00"/><rect x="123.00" y="2.00" width="3.00" height="4.04"/><rect x="123.00" y="10.00" width="3.00" height="7.00"/><rect x="123.00" y="20.96" width="3.00" height="7.00"/><rect x="123.00" y="31.92" width="3.00" height="7.00"/><rect x="123.00" y="42.88" width="3.00" height="7.00"/><rect x="123.00" y="53.84" width="3.00" height="1.16"/></g></svg>
<svg class="r dash" style="left:35px;top:270px" width="115" height="86"><g fill="#003472"><rect x="4.00" y="2.00" width="7.00" height="3.00"/><rect x="14.96" y="2.00" width="7.00" height="3.00"/><rect x="25.92" y="2.00" width="7.00" height="3.00"/><rect x="36.88" y="2.00" width="7.00" height="3.00"/><rect x="47.84" y="2.00" width="7.00" height="3.00"/><rect x="58.80" y="2.00" width="7.00" height="3.00"/><rect x="69.76" y="2.00" width="7.00" height="3.00"/><rect x="80.72" y="2.00" width="7.00" height="3.00"/><rect x="91.68" y="2.00" width="7.00" height="3.00"/><rect x="102.64" y="2.00" width="6.36" height="3.00"/><rect x="4.00" y="77.00" width="7.00" height="3.00"/><rect x="14.96" y="77.00" width="7.00" height="3.00"/><rect x="25.92" y="77.00" width="7.00" height="3.00"/><rect x="36.88" y="77.00" width="7.00" height="3.00"/><rect x="47.84" y="77.00" width="7.00" height="3.00"/><rect x="58.80" y="77.00" width="7.00" height="3.00"/><rect x="69.76" y="77.00" width="7.00" height="3.00"/><rect x="80.72" y="77.00" width="7.00" height="3.00"/><rect x="91.68" y="77.00" width="7.00" height="3.00"/><rect x="102.64" y="77.00" width="6.36" height="3.00"/><rect x="2.00" y="2.00" width="3.00" height="7.00"/><rect x="2.00" y="12.96" width="3.00" height="7.00"/><rect x="2.00" y="23.92" width="3.00" height="7.00"/><rect x="2.00" y="34.88" width="3.00" height="7.00"/><rect x="2.00" y="45.84" width="3.00" height="7.00"/><rect x="2.00" y="56.80" width="3.00" height="7.00"/><rect x="2.00" y="67.76" width="3.00" height="7.00"/><rect x="2.00" y="78.72" width="3.00" height="1.28"/><rect x="106.00" y="2.00" width="3.00" height="4.04"/><rect x="106.00" y="10.00" width="3.00" height="7.00"/><rect x="106.00" y="20.96" width="3.00" height="7.00"/><rect x="106.00" y="31.92" width="3.00" height="7.00"/><rect x="106.00" y="42.88" width="3.00" height="7.00"/><rect x="106.00" y="53.84" width="3.00" height="7.00"/><rect x="106.00" y="64.80" width="3.00" height="7.00"/><rect x="106.00" y="75.76" width="3.00" height="4.24"/></g></svg>
<svg class="r dash" style="left:146px;top:202px" width="316" height="40"><g fill="#003472"><rect x="2.00" y="2.00" width="0.04" height="3.00"/><rect x="6.00" y="2.00" width="7.00" height="3.00"/><rect x="16.96" y="2.00" width="7.00" height="3.00"/><rect x="27.92" y="2.00" width="7.00" height="3.00"/><rect x="38.88" y="2.00" width="7.00" height="3.00"/><rect x="49.84" y="2.00" width="7.00" height="3.00"/><rect x="60.80" y="2.00" width="7.00" height="3.00"/><rect x="71.76" y="2.00" width="7.00" height="3.00"/><rect x="82.72" y="2.00" width="7.00" height="3.00"/><rect x="93.68" y="2.00" width="7.00" height="3.00"/><rect x="104.64" y="2.00" width="7.00" height="3.00"/><rect x="115.60" y="2.00" width="7.00" height="3.00"/><rect x="126.56" y="2.00" width="7.00" height="3.00"/><rect x="137.52" y="2.00" width="7.00" height="3.00"/><rect x="148.48" y="2.00" width="7.00" height="3.00"/><rect x="159.44" y="2.00" width="7.00" height="3.00"/><rect x="170.40" y="2.00" width="7.00" height="3.00"/><rect x="181.36" y="2.00" width="7.00" height="3.00"/><rect x="192.32" y="2.00" width="7.00" height="3.00"/><rect x="203.28" y="2.00" width="7.00" height="3.00"/><rect x="214.24" y="2.00" width="7.00" height="3.00"/><rect x="225.20" y="2.00" width="7.00" height="3.00"/><rect x="236.16" y="2.00" width="7.00" height="3.00"/><rect x="247.12" y="2.00" width="7.00" height="3.00"/><rect x="258.08" y="2.00" width="7.00" height="3.00"/><rect x="269.04" y="2.00" width="7.00" height="3.00"/><rect x="280.00" y="2.00" width="7.00" height="3.00"/><rect x="290.96" y="2.00" width="7.00" height="3.00"/><rect x="301.92" y="2.00" width="7.00" height="3.00"/><rect x="2.00" y="31.00" width="0.04" height="3.00"/><rect x="6.00" y="31.00" width="7.00" height="3.00"/><rect x="16.96" y="31.00" width="7.00" height="3.00"/><rect x="27.92" y="31.00" width="7.00" height="3.00"/><rect x="38.88" y="31.00" width="7.00" height="3.00"/><rect x="49.84" y="31.00" width="7.00" height="3.00"/><rect x="60.80" y="31.00" width="7.00" height="3.00"/><rect x="71.76" y="31.00" width="7.00" height="3.00"/><rect x="82.72" y="31.00" width="7.00" height="3.00"/><rect x="93.68" y="31.00" width="7.00" height="3.00"/><rect x="104.64" y="31.00" width="7.00" height="3.00"/><rect x="115.60" y="31.00" width="7.00" height="3.00"/><rect x="126.56" y="31.00" width="7.00" height="3.00"/><rect x="137.52" y="31.00" width="7.00" height="3.00"/><rect x="148.48" y="31.00" width="7.00" height="3.00"/><rect x="159.44" y="31.00" width="7.00" height="3.00"/><rect x="170.40" y="31.00" width="7.00" height="3.00"/><rect x="181.36" y="31.00" width="7.00" height="3.00"/><rect x="192.32" y="31.00" width="7.00" height="3.00"/><rect x="203.28" y="31.00" width="7.00" height="3.00"/><rect x="214.24" y="31.00" width="7.00" height="3.00"/><rect x="225.20" y="31.00" width="7.00" height="3.00"/><rect x="236.16" y="31.00" width="7.00" height="3.00"/><rect x="247.12" y="31.00" width="7.00" height="3.00"/><rect x="258.08" y="31.00" width="7.00" height="3.00"/><rect x="269.04" y="31.00" width="7.00" height="3.00"/><rect x="280.00" y="31.00" width="7.00" height="3.00"/><rect x="290.96" y="31.00" width="7.00" height="3.00"/><rect x="301.92" y="31.00" width="7.00" height="3.00"/><rect x="2.00" y="2.00" width="3.00" height="7.00"/><rect x="2.00" y="12.96" width="3.00" height="7.00"/><rect x="2.00" y="23.92" width="3.00" height="7.00"/><rect x="307.00" y="2.00" width="3.00" height="3.04"/><rect x="307.00" y="9.00" width="3.00" height="7.00"/><rect x="307.00" y="19.96" width="3.00" height="7.00"/><rect x="307.00" y="30.92" width="3.00" height="3.08"/></g></svg>
<svg class="r dash" style="left:148px;top:324.3px" width="102" height="324.7"><g fill="#003472"><rect x="5.00" y="2.00" width="7.00" height="3.00"/><rect x="15.96" y="2.00" width="7.00" height="3.00"/><rect x="26.92" y="2.00" width="7.00" height="3.00"/><rect x="37.88" y="2.00" width="7.00" height="3.00"/><rect x="48.84" y="2.00" width="7.00" height="3.00"/><rect x="59.80" y="2.00" width="7.00" height="3.00"/><rect x="70.76" y="2.00" width="7.00" height="3.00"/><rect x="81.72" y="2.00" width="7.00" height="3.00"/><rect x="92.68" y="2.00" width="3.32" height="3.00"/><rect x="2.00" y="315.70" width="1.04" height="3.00"/><rect x="7.00" y="315.70" width="7.00" height="3.00"/><rect x="17.96" y="315.70" width="7.00" height="3.00"/><rect x="28.92" y="315.70" width="7.00" height="3.00"/><rect x="39.88" y="315.70" width="7.00" height="3.00"/><rect x="50.84" y="315.70" width="7.00" height="3.00"/><rect x="61.80" y="315.70" width="7.00" height="3.00"/><rect x="72.76" y="315.70" width="7.00" height="3.00"/><rect x="83.72" y="315.70" width="7.00" height="3.00"/><rect x="94.68" y="315.70" width="1.32" height="3.00"/><rect x="2.00" y="2.00" width="3.00" height="7.00"/><rect x="2.00" y="12.96" width="3.00" height="7.00"/><rect x="2.00" y="23.92" width="3.00" height="7.00"/><rect x="2.00" y="34.88" width="3.00" height="7.00"/><rect x="2.00" y="45.84" width="3.00" height="7.00"/><rect x="2.00" y="56.80" width="3.00" height="7.00"/><rect x="2.00" y="67.76" width="3.00" height="7.00"/><rect x="2.00" y="78.72" width="3.00" height="7.00"/><rect x="2.00" y="89.68" width="3.00" height="7.00"/><rect x="2.00" y="100.64" width="3.00" height="7.00"/><rect x="2.00" y="111.60" width="3.00" height="7.00"/><rect x="2.00" y="122.56" width="3.00" height="7.00"/><rect x="2.00" y="133.52" width="3.00" height="7.00"/><rect x="2.00" y="144.48" width="3.00" height="7.00"/><rect x="2.00" y="155.44" width="3.00" height="7.00"/><rect x="2.00" y="166.40" width="3.00" height="7.00"/><rect x="2.00" y="177.36" width="3.00" height="7.00"/><rect x="2.00" y="188.32" width="3.00" height="7.00"/><rect x="2.00" y="199.28" width="3.00" height="7.00"/><rect x="2.00" y="210.24" width="3.00" height="7.00"/><rect x="2.00" y="221.20" width="3.00" height="7.00"/><rect x="2.00" y="232.16" width="3.00" height="7.00"/><rect x="2.00" y="243.12" width="3.00" height="7.00"/><rect x="2.00" y="254.08" width="3.00" height="7.00"/><rect x="2.00" y="265.04" width="3.00" height="7.00"/><rect x="2.00" y="276.00" width="3.00" height="7.00"/><rect x="2.00" y="286.96" width="3.00" height="7.00"/><rect x="2.00" y="297.92" width="3.00" height="7.00"/><rect x="2.00" y="308.88" width="3.00" height="7.00"/><rect x="93.00" y="2.00" width="3.00" height="7.00"/><rect x="93.00" y="12.96" width="3.00" height="7.00"/><rect x="93.00" y="23.92" width="3.00" height="7.00"/><rect x="93.00" y="34.88" width="3.00" height="7.00"/><rect x="93.00" y="45.84" width="3.00" height="7.00"/><rect x="93.00" y="56.80" width="3.00" height="7.00"/><rect x="93.00" y="67.76" width="3.00" height="7.00"/><rect x="93.00" y="78.72" width="3.00" height="7.00"/><rect x="93.00" y="89.68" width="3.00" height="7.00"/><rect x="93.00" y="100.64" width="3.00" height="7.00"/><rect x="93.00" y="111.60" width="3.00" height="7.00"/><rect x="93.00" y="122.56" width="3.00" height="7.00"/><rect x="93.00" y="133.52" width="3.00" height="7.00"/><rect x="93.00" y="144.48" width="3.00" height="7.00"/><rect x="93.00" y="155.44" width="3.00" height="7.00"/><rect x="93.00" y="166.40" width="3.00" height="7.00"/><rect x="93.00" y="177.36" width="3.00" height="7.00"/><rect x="93.00" y="188.32" width="3.00" height="7.00"/><rect x="93.00" y="199.28" width="3.00" height="7.00"/><rect x="93.00" y="210.24" width="3.00" height="7.00"/><rect x="93.00" y="221.20" width="3.00" height="7.00"/><rect x="93.00" y="232.16" width="3.00" height="7.00"/><rect x="93.00" y="243.12" width="3.00" height="7.00"/><rect x="93.00" y="254.08" width="3.00" height="7.00"/><rect x="93.00" y="265.04" width="3.00" height="7.00"/><rect x="93.00" y="276.00" width="3.00" height="7.00"/><rect x="93.00" y="286.96" width="3.00" height="7.00"/><rect x="93.00" y="297.92" width="3.00" height="7.00"/><rect x="93.00" y="308.88" width="3.00" height="7.00"/></g></svg>
</body></html>
